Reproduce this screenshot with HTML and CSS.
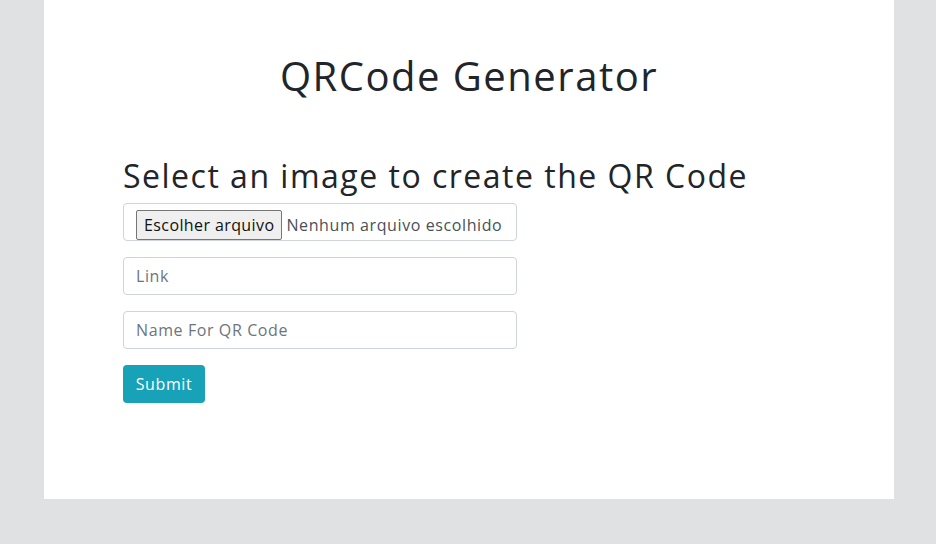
FILE: index.html
```html
<!DOCTYPE html>
<html lang="pt">
<head>
<meta charset="utf-8">
<title>QRCode Generator</title>
<link rel="stylesheet" href="styles.css">
</head>
<body>
<main class="card">
  <h1 class="title">QRCode Generator</h1>
  <form class="form">
    <h2 class="subtitle">Select an image to create the QR Code</h2>
    <label class="file-field">
      <span class="file-btn">Escolher arquivo</span>
      <span class="file-name">Nenhum arquivo escolhido</span>
    </label>
    <input class="field" type="text" placeholder="Link">
    <input class="field" type="text" placeholder="Name For QR Code">
    <button class="submit" type="button">Submit</button>
  </form>
</main>
</body>
</html>
```
FILE: styles.css
```css
* { box-sizing: border-box; }
html, body { margin: 0; padding: 0; }
body {
  background: #e0e1e3;
  font-family: "Open Sans", "Liberation Sans", sans-serif;
  color: #212529;
  height: 544px;
  overflow: hidden;
}
.card {
  background: #fff;
  width: 850px;
  height: 499px;
  margin-left: 44px;
  padding: 48px 79px 0;
}
.title {
  margin: 0;
  text-align: center;
  font-weight: 400;
  font-size: 40px;
  line-height: 56px;
  letter-spacing: 1.5px;
}
.form {
  margin-top: 50px;
  display: flex;
  flex-direction: column;
  align-items: flex-start;
  gap: 16px;
}
.subtitle {
  margin: 0 0 -11px;
  font-weight: 400;
  font-size: 32px;
  line-height: 44px;
  letter-spacing: 1.5px;
}
.file-field, .field {
  width: 394px;
  height: 38px;
  border: 1px solid #ced4da;
  border-radius: 4px;
  background: #fff;
}
.file-field {
  display: flex;
  align-items: flex-start;
  padding: 6px 12px 0;
  font-size: 16px;
  gap: 4px;
  color: #495057;
  letter-spacing: 0.6px;
}
.file-btn, .file-name {
  display: inline-flex;
  align-items: center;
  height: 30px;
}
.file-btn {
  padding: 0 7px;
  background: #efefef;
  border: 1px solid #767676;
  border-radius: 2px;
  color: #111;
  font-size: 16px;
  letter-spacing: 0.4px;
}
.field {
  padding: 0 12px;
  font: inherit;
  font-size: 16px;
  color: #495057;
  letter-spacing: 0.6px;
}
.field::placeholder { color: #6c757d; }
.submit {
  width: 82px;
  height: 38px;
  border: 0;
  border-radius: 4px;
  background: #17a2b8;
  color: #fff;
  font: inherit;
  font-size: 16px;
  font-weight: 500;
  letter-spacing: 0.6px;
}
```
